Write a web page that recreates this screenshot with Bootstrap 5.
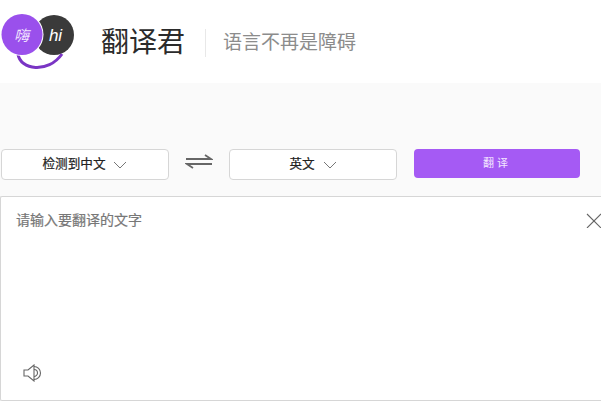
<!DOCTYPE html>
<html lang="zh-CN">
<head>
  <meta charset="UTF-8">
  <meta name="viewport" content="width=device-width, initial-scale=1.0">
  <title>翻译君</title>
  <link href="https://cdn.jsdelivr.net/npm/bootstrap@5.3.0/dist/css/bootstrap.min.css" rel="stylesheet">
  <style>
    html, body { height: 100%; }
    body {
      width: 601px;
      height: 401px;
      overflow: hidden;
      background: #fafafa;
      font-family: "Liberation Sans", "Noto Sans CJK SC", sans-serif;
    }
    .top-bar { height: 83px; background: #fff; }
    .logo-box { width: 76px; height: 70px; }
    .brand-row { padding-top: 27px; }
    .brand-name { font-size: 28px; line-height: 32px; color: #2b2b2b; margin-left: 25px; width: 84px; white-space: nowrap; }
    .brand-sep { width: 1px; height: 28px; background: #e8e8e8; margin: 2px 17px 0 20px; }
    .brand-slogan { font-size: 19px; line-height: 32px; color: #8c8c8c; white-space: nowrap; }
    .tool-row { height: 113px; padding-top: 66px; padding-left: 1px; }
    .lang-btn {
      width: 168px;
      height: 31px;
      background: #fff;
      border: 1px solid #d6d6d6;
      border-radius: 4px;
      font-size: 12.6px;
      color: #222;
      -webkit-text-stroke: 0.2px #222;
    }
    .swap-box { width: 60px; }
    .go-btn {
      width: 166px;
      height: 29px;
      margin-left: 17px;
      background: #a55af4;
      border-radius: 4px;
      font-size: 11px;
      letter-spacing: 3px;
      color: #f3e6ff;
    }
    .input-panel {
      height: 205px;
      background: #fff;
      border: 1px solid #d6d6d6;
      border-right: 0;
      border-radius: 2px 0 0 2px;
    }
    .hint-text { font-size: 14px; color: #777; left: 15px; top: 13px; -webkit-text-stroke: 0.2px #777; }
    .close-icon { right: 0; top: 16px; }
    .sound-icon { left: 21px; bottom: 18px; }
  </style>
</head>
<body>
  <div class="top-bar d-flex align-items-start">
    <div class="logo-box flex-shrink-0">
      <svg width="76" height="70" viewBox="0 0 76 70">
        <circle cx="54" cy="35" r="20" fill="#3a3a3a"/>
        <path d="M18 54 C20 70 48 74 62 54" fill="none" stroke="#7a35c4" stroke-width="3"/>
        <circle cx="22" cy="34.5" r="21.5" fill="#fff"/>
        <circle cx="22" cy="34.5" r="20.5" fill="#9a50ec"/>
        <text x="21.5" y="41" text-anchor="middle" font-size="15" font-style="italic" fill="#f2e6ff" font-family="Noto Sans CJK SC, sans-serif">嗨</text>
        <text x="55.5" y="41" text-anchor="middle" font-size="17" font-style="italic" fill="#fff" font-family="Liberation Sans, sans-serif">hi</text>
      </svg>
    </div>
    <div class="brand-row d-flex align-items-start">
      <div class="brand-name">翻译君</div>
      <div class="brand-sep"></div>
      <div class="brand-slogan">语言不再是障碍</div>
    </div>
  </div>

  <div class="tool-row d-flex align-items-start">
    <div class="lang-btn d-flex align-items-center justify-content-center gap-2">
      <span>检测到中文</span>
      <svg width="14" height="8" viewBox="0 0 14 8"><path d="M1 1l6 6 6-6" fill="none" stroke="#777" stroke-width="1"/></svg>
    </div>
    <div class="swap-box d-flex justify-content-center">
      <svg width="28" height="20" viewBox="0 0 28 20">
        <path d="M1 10H26L20 6" fill="none" stroke="#666" stroke-width="1.8"/>
        <path d="M27 15H2L8 19" fill="none" stroke="#666" stroke-width="1.8"/>
      </svg>
    </div>
    <div class="lang-btn d-flex align-items-center justify-content-center gap-2">
      <span>英文</span>
      <svg width="14" height="8" viewBox="0 0 14 8"><path d="M1 1l6 6 6-6" fill="none" stroke="#777" stroke-width="1"/></svg>
    </div>
    <div class="go-btn d-flex align-items-center justify-content-center">翻译</div>
  </div>

  <div class="input-panel position-relative">
    <div class="hint-text position-absolute">请输入要翻译的文字</div>
    <svg class="close-icon position-absolute" width="15" height="15" viewBox="0 0 15 15">
      <path d="M1 1l14 14M15 1L1 15" fill="none" stroke="#666" stroke-width="1.1"/>
    </svg>
    <svg class="sound-icon position-absolute" width="22" height="18" viewBox="0 0 22 18">
      <path d="M2 6H6L12 1V17L6 12H2Z" fill="none" stroke="#666" stroke-width="1.1"/>
      <path d="M12 5.5a3.5 3.5 0 0 1 0 7M12 2.5a6.5 6.5 0 0 1 0 13" fill="none" stroke="#666" stroke-width="1.1"/>
    </svg>
  </div>

  <script src="https://cdn.jsdelivr.net/npm/bootstrap@5.3.0/dist/js/bootstrap.bundle.min.js"></script>
</body>
</html>
